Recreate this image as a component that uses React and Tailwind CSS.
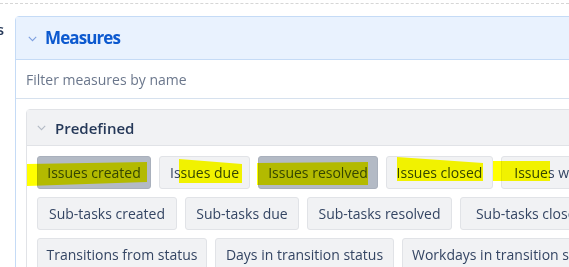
import React from 'react';

const ROWS = [
  [
    { label: 'Issues created', w: 'w-[114px]', on: true },
    { label: 'Issues due', w: 'w-[91px]' },
    { label: 'Issues resolved', w: 'w-[120px]', on: true },
    { label: 'Issues closed', w: 'w-[107px]' },
    { label: 'Issues with due date', w: 'w-[160px]' },
  ],
  [
    { label: 'Sub-tasks created', w: 'w-[140px]' },
    { label: 'Sub-tasks due', w: 'w-[114px]' },
    { label: 'Sub-tasks resolved', w: 'w-[145px]' },
    { label: 'Sub-tasks closed', w: 'w-[140px]' },
  ],
  [
    { label: 'Transitions from status', w: 'w-[170px]' },
    { label: 'Days in transition status', w: 'w-[179px]' },
    { label: 'Workdays in transition status', w: 'w-[210px]' },
  ],
];

function Chevron({ className }) {
  return (
    <svg width="9" height="6" viewBox="0 0 9 6" className={className} fill="none">
      <path d="M0.8 0.8 L4.5 4.6 L8.2 0.8" stroke="currentColor" strokeWidth="1.1" />
    </svg>
  );
}

function MeasureButton({ label, w, on }) {
  return (
    <div
      className={`${w} shrink-0 h-[33px] flex items-center justify-center whitespace-nowrap rounded-[3px] border text-[14px] text-[#344563] ${
        on ? 'bg-[#b3bac5] border-[#a9b0bc]' : 'bg-[#f1f2f4] border-[#e1e3e7]'
      }`}
    >
      {label}
    </div>
  );
}

export default function App() {
  return (
    <div className="relative w-[569px] h-[267px] overflow-hidden bg-white" style={{ fontFamily: '"Open Sans", "Noto Sans", sans-serif' }}>
      <div className="pt-[3px]">
        <div className="border-t border-dashed border-[#d6d6d6]" />
      </div>

      <div className="flex mt-[12px]">
        <div className="w-[15px] shrink-0 flex justify-end overflow-hidden pt-[6px] pr-[11px]">
          <span className="text-[15px] font-semibold text-[#253858] whitespace-nowrap leading-none">Measures</span>
        </div>

        <div className="w-[620px] shrink-0 border border-[#c5dbf6] rounded-tl-[4px]">
          <div className="h-[43px] bg-[#e9f2fe] border-b border-[#c5dbf6] flex items-center pl-[12px]">
            <Chevron className="text-[#7d9fe0] mt-[1px]" />
            <span className="ml-[8px] text-[17px] font-bold text-[#0c59cf] tracking-[-0.9px]">Measures</span>
          </div>
          <div className="h-[39px] border-b border-[#d6e1ee] flex items-center pl-[10px] pt-[1px] text-[14px] text-[#6b778c]">
            Filter measures by name
          </div>

          <div className="pt-[10px] pl-[10px]">
            <div className="border border-[#e1e3e7] rounded-tl-[4px]">
              <div className="h-[36px] bg-[#f1f2f4] border-b border-[#e1e3e7] flex items-center pl-[10px] pt-[1px]">
                <Chevron className="text-[#b3bac5]" />
                <span className="ml-[9px] text-[15px] font-semibold text-[#253858]">Predefined</span>
              </div>
              <div className="pt-[10px] pl-[10px] flex flex-col gap-[8px]">
                {ROWS.map((row, i) => (
                  <div key={i} className="flex gap-[8px]">
                    {row.map((b) => (
                      <MeasureButton key={b.label} {...b} />
                    ))}
                  </div>
                ))}
              </div>
            </div>
          </div>
        </div>
      </div>

      {/* marker highlights drawn over the buttons */}
      <div className="absolute left-[27px] top-[162px] w-[120px] h-[24px] bg-[#ffff00] mix-blend-multiply [clip-path:polygon(0_2px,100%_0,100%_20px,0_100%)]" />
      <div className="absolute left-[179px] top-[159px] w-[63px] h-[24px] bg-[#ffff00] mix-blend-multiply [clip-path:polygon(0_0,100%_5px,100%_100%,0_100%)]" />
      <div className="absolute left-[257px] top-[162px] w-[111px] h-[23px] bg-[#ffff00] mix-blend-multiply [clip-path:polygon(0_1px,100%_0,100%_100%,0_100%)]" />
      <div className="absolute left-[397px] top-[157px] w-[86px] h-[24px] bg-[#ffff00] mix-blend-multiply [clip-path:polygon(0_0,100%_6px,100%_100%,0_100%)]" />
      <div className="absolute left-[493px] top-[161px] w-[57px] h-[20px] bg-[#ffff00] mix-blend-multiply" />
    </div>
  );
}
